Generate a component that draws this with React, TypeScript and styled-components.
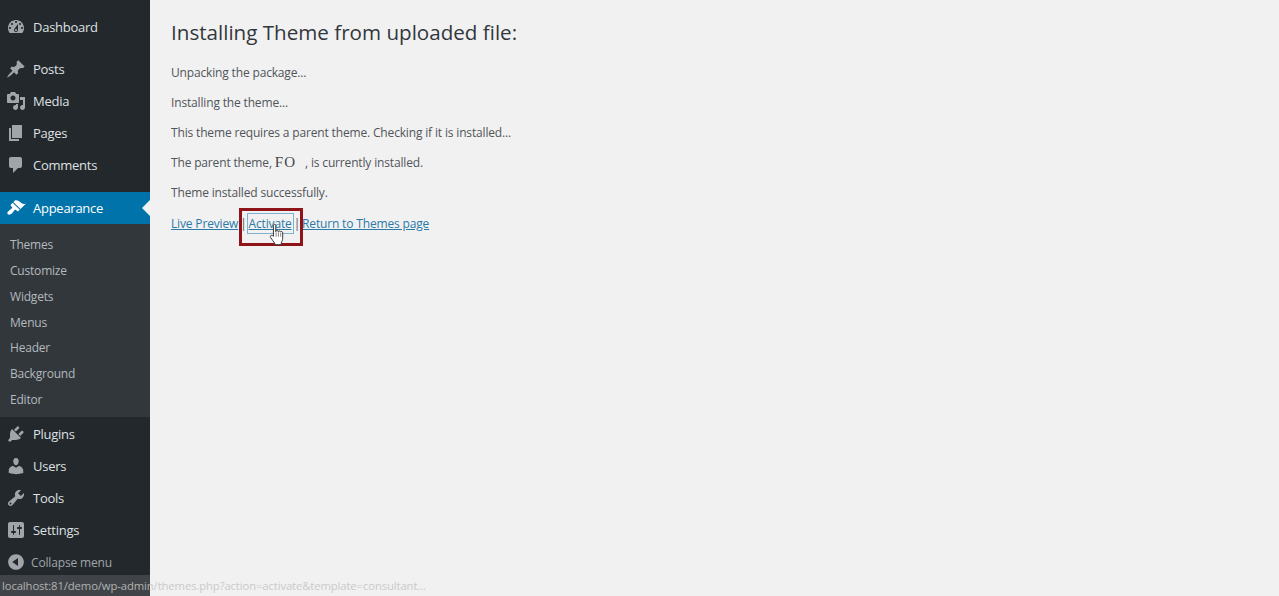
import React, { FC } from 'react';
import styled, { createGlobalStyle } from 'styled-components';

const ICONS: Record<string, string> = {
  dashboard:
    'M3.76 16h12.48c1.1-1.37 1.76-3.11 1.76-5 0-4.42-3.58-8-8-8s-8 3.58-8 8c0 1.89.66 3.63 1.76 5zM10 4c.55 0 1 .45 1 1s-.45 1-1 1-1-.45-1-1 .45-1 1-1zM6 6c.55 0 1 .45 1 1s-.45 1-1 1-1-.45-1-1 .45-1 1-1zm8 0c.55 0 1 .45 1 1s-.45 1-1 1-1-.45-1-1 .45-1 1-1zm-5.37 5.55L12 7v6c0 1.1-.9 2-2 2s-2-.9-2-2c0-.57.24-1.08.63-1.45zM4 10c.55 0 1 .45 1 1s-.45 1-1 1-1-.45-1-1 .45-1 1-1zm12 0c.55 0 1 .45 1 1s-.45 1-1 1-1-.45-1-1 .45-1 1-1zm-5 3c0-.55-.45-1-1-1s-1 .45-1 1 .45 1 1 1 1-.45 1-1z',
  posts:
    'M10.44 3.02l1.82-1.82 6.36 6.35-1.83 1.82c-1.05-.68-2.48-.57-3.41.36l-.75.75c-.92.93-1.04 2.35-.35 3.41l-1.83 1.82-2.41-2.41-2.8 2.79c-.42.42-3.38 2.71-3.8 2.29s1.86-3.39 2.28-3.81l2.79-2.79L4.1 9.36l1.83-1.82c1.05.69 2.48.57 3.4-.36l.75-.75c.93-.92 1.05-2.35.36-3.41z',
  media:
    'M13 11V4c0-.55-.45-1-1-1h-1.67L9 1H5L3.67 3H2c-.55 0-1 .45-1 1v7c0 .55.45 1 1 1h10c.55 0 1-.45 1-1zM7 4.5c1.38 0 2.5 1.12 2.5 2.5S8.38 9.5 7 9.5 4.5 8.38 4.5 7 5.62 4.5 7 4.5zM14 6h5v10.5c0 1.38-1.12 2.5-2.5 2.5S14 17.88 14 16.5s1.12-2.5 2.5-2.5c.17 0 .34.02.5.05V9h-3V6zm-4 8.05V13h2v3.5c0 1.38-1.12 2.5-2.5 2.5S7 17.88 7 16.5 8.12 14 9.5 14c.17 0 .34.02.5.05z',
  pages: 'M6 15V2h10v13H6zm-1 1h8v2H3V5h2v11z',
  comments: 'M5 2h9c1.1 0 2 .9 2 2v7c0 1.1-.9 2-2 2h-2l-5 5v-5H5c-1.1 0-2-.9-2-2V4c0-1.1.9-2 2-2z',
  appearance:
    'M14.48 11.06L7.41 3.99l1.5-1.5c.5-.56 2.3-.47 3.51.32 1.21.8 1.43 1.28 2.91 2.1 1.18.64 2.45 1.26 4.45.85zm-.71.71L6.7 4.7 4.93 6.47c-.39.39-.39 1.02 0 1.41l1.06 1.06c.39.39.39 1.03 0 1.42-.6.6-1.43 1.11-2.21 1.69-.35.26-.7.53-1.01.84C1.43 13.23.91 15.24 1.84 16.17c.92.93 2.94.4 4.28-.94.31-.3.58-.65.84-1 .58-.78 1.09-1.61 1.69-2.21.39-.39 1.02-.39 1.41 0l1.06 1.06c.39.39 1.02.39 1.41 0z',
  plugins:
    'M13.11 4.36L9.87 7.6 8 5.73l3.24-3.24c.35-.34 1.05-.2 1.56.32.52.51.66 1.21.31 1.55zm-8 1.77l.91-1.12 9.01 9.01-1.19.84c-.71.71-2.63 1.16-3.82 1.16H6.14L4.9 17.26c-.59.59-1.54.59-2.12 0-.59-.58-.59-1.53 0-2.12l1.24-1.24v-3.88c0-1.13.4-3.19 1.09-3.89zm7.26 3.97l3.24-3.24c.34-.35 1.04-.21 1.55.31.52.51.66 1.21.31 1.55l-3.24 3.25z',
  users:
    'M10 9.25c-2.27 0-2.73-3.44-2.73-3.44C7 4.02 7.82 2 9.97 2c2.16 0 2.98 2.02 2.71 3.81 0 0-.41 3.44-2.68 3.44zm0 2.57L12.72 10c2.39 0 4.52 2.33 4.52 4.53v2.49s-3.65 1.13-7.24 1.13c-3.65 0-7.24-1.13-7.24-1.13v-2.49c0-2.25 1.94-4.48 4.47-4.48z',
  tools:
    'M16.68 9.77c-1.34 1.34-3.3 1.67-4.95.99l-5.41 6.52c-.99.99-2.59.99-3.58 0s-.99-2.59 0-3.57l6.52-5.42c-.68-1.65-.35-3.61.99-4.95 1.28-1.28 3.12-1.62 4.72-1.06l-2.89 2.89 2.82 2.82 2.86-2.87c.53 1.58.18 3.39-1.08 4.65zM3.81 16.21c.4.39 1.04.39 1.43 0 .4-.4.4-1.04 0-1.43-.39-.4-1.03-.4-1.43 0-.39.39-.39 1.03 0 1.43z',
  settings:
    'M18 16V4c0-1.1-.9-2-2-2H4c-1.1 0-2 .9-2 2v12c0 1.1.9 2 2 2h12c1.1 0 2-.9 2-2zM8 11h1c.55 0 1 .45 1 1s-.45 1-1 1H8v1.5c0 .28-.22.5-.5.5s-.5-.22-.5-.5V13H6c-.55 0-1-.45-1-1s.45-1 1-1h1V5.5c0-.28.22-.5.5-.5s.5.22.5.5V11zm5-2h-1c-.55 0-1-.45-1-1s.45-1 1-1h1V5.5c0-.28.22-.5.5-.5s.5.22.5.5V7h1c.55 0 1 .45 1 1s-.45 1-1 1h-1v5.5c0 .28-.22.5-.5.5s-.5-.22-.5-.5V9z',
  collapse:
    'M10 2.16c4.33 0 7.84 3.51 7.84 7.84s-3.51 7.84-7.84 7.84S2.16 14.33 2.16 10 5.71 2.16 10 2.16zm2 11.72V6.12L6.18 9.97z',
};

const GlobalStyle = createGlobalStyle`
  html, body {
    margin: 0;
    padding: 0;
    height: 100%;
    overflow: hidden;
    background: #f1f1f1;
  }
  body {
    font-family: "Open Sans", "Noto Sans", sans-serif;
  }
`;

const Page = styled.div`
  position: relative;
  display: flex;
  width: 1279px;
  height: 596px;
  overflow: hidden;
`;

const Sidebar = styled.nav`
  flex: 0 0 150px;
  display: flex;
  flex-direction: column;
  padding-top: 11px;
  box-sizing: border-box;
  background: #23282d;
`;

const MenuItem = styled.div<{ $active?: boolean; $gap?: number }>`
  position: relative;
  display: flex;
  align-items: center;
  flex: 0 0 32px;
  margin-bottom: ${(p) => p.$gap ?? 0}px;
  padding-left: 6px;
  gap: 7px;
  font-size: 13px;
  letter-spacing: -0.26px;
  color: ${(p) => (p.$active ? '#ffffff' : '#dfe0e1')};
  background: ${(p) => (p.$active ? '#0073aa' : 'transparent')};

  ${(p) =>
    p.$active
      ? `&::after {
    content: '';
    position: absolute;
    right: 0;
    top: 8px;
    border: 8px solid transparent;
    border-right-color: #f1f1f1;
    border-left-width: 0;
  }`
      : ''}
`;

const MenuIcon = styled.svg<{ $active?: boolean }>`
  flex: 0 0 20px;
  width: 20px;
  height: 20px;
  fill: ${(p) => (p.$active ? '#ffffff' : '#a0a5aa')};
`;

const SubMenu = styled.div`
  display: flex;
  flex-direction: column;
  flex: 0 0 193px;
  margin-bottom: 1px;
  padding: 8px 0 5px;
  box-sizing: border-box;
  background: #32373c;
`;

const SubItem = styled.div`
  flex: 1;
  display: flex;
  align-items: center;
  padding-left: 10px;
  font-size: 12px;
  letter-spacing: -0.2px;
  color: #b4b9be;
`;

const CollapseItem = styled.div`
  display: flex;
  align-items: center;
  flex: 0 0 32px;
  padding-left: 6px;
  gap: 5px;
  font-size: 12px;
  letter-spacing: -0.15px;
  color: #a0a5aa;
`;

const Content = styled.main`
  flex: 1;
  display: flex;
  flex-direction: column;
  padding: 18px 0 0 21px;
  color: #50555a;
  font-size: 12px;
  letter-spacing: -0.16px;
`;

const Heading = styled.h1`
  margin: 0 0 10px;
  font-size: 20.6px;
  line-height: 29px;
  font-weight: 400;
  letter-spacing: 0;
  color: #32373c;
`;

const Line = styled.p`
  display: flex;
  align-items: center;
  margin: 0;
  height: 30.2px;
  white-space: pre;
`;

const ThemeName = styled.span`
  font-family: "Liberation Serif", serif;
  font-size: 15px;
  letter-spacing: 1px;
  margin: 0 9px 0 3px;
  color: #444444;
`;

const ThemeLink = styled.a`
  color: #2a7aa8;
  text-decoration: underline;
`;

const Separator = styled.span`
  margin: 0 2px;
  color: #555555;
`;

const ActiveWrap = styled.span`
  position: relative;
  display: inline-block;
`;

const FocusedLink = styled(ThemeLink)`
  outline: 1px solid #7fb0cf;
  outline-offset: 1px;
`;

const Highlight = styled.span`
  position: absolute;
  left: -10px;
  top: -7px;
  width: 58px;
  height: 32px;
  border: 3px solid #8f1418;
`;

const Cursor = styled.svg`
  position: absolute;
  left: 20px;
  top: 8px;
  width: 16px;
  height: 23px;
`;

const StatusBar = styled.div`
  position: absolute;
  left: 0;
  bottom: 0;
  display: flex;
  align-items: center;
  width: 425px;
  height: 21px;
  padding-left: 2px;
  box-sizing: border-box;
  font-size: 11.3px;
  letter-spacing: -0.12px;
  color: #c4c4c4;
  background: rgba(241, 241, 241, 0.14);
  white-space: nowrap;
`;

const StatusText = styled.span`
  opacity: 0.85;
`;

const Icon: FC<{ name: string; active?: boolean }> = ({ name, active }) => (
  <MenuIcon $active={active} viewBox="0 0 20 20">
    <path d={ICONS[name]} />
  </MenuIcon>
);

const topItems = [
  { name: 'posts', label: 'Posts' },
  { name: 'media', label: 'Media' },
  { name: 'pages', label: 'Pages' },
];

const subItems = ['Themes', 'Customize', 'Widgets', 'Menus', 'Header', 'Background', 'Editor'];

const bottomItems = [
  { name: 'plugins', label: 'Plugins' },
  { name: 'users', label: 'Users' },
  { name: 'tools', label: 'Tools' },
  { name: 'settings', label: 'Settings' },
];

const App: FC = () => (
  <Page>
    <GlobalStyle />
    <Sidebar>
      <MenuItem $gap={10}>
        <Icon name="dashboard" />
        Dashboard
      </MenuItem>
      {topItems.map((item) => (
        <MenuItem key={item.name}>
          <Icon name={item.name} />
          {item.label}
        </MenuItem>
      ))}
      <MenuItem $gap={11}>
        <Icon name="comments" />
        Comments
      </MenuItem>
      <MenuItem $active>
        <Icon name="appearance" active />
        Appearance
      </MenuItem>
      <SubMenu>
        {subItems.map((item) => (
          <SubItem key={item}>{item}</SubItem>
        ))}
      </SubMenu>
      {bottomItems.map((item) => (
        <MenuItem key={item.name}>
          <Icon name={item.name} />
          {item.label}
        </MenuItem>
      ))}
      <CollapseItem>
        <Icon name="collapse" />
        Collapse menu
      </CollapseItem>
    </Sidebar>
    <Content>
      <Heading>Installing Theme from uploaded file:</Heading>
      <Line>Unpacking the package...</Line>
      <Line>Installing the theme...</Line>
      <Line>This theme requires a parent theme. Checking if it is installed...</Line>
      <Line>
        The parent theme,
        <ThemeName>FO</ThemeName>, is currently installed.
      </Line>
      <Line>Theme installed successfully.</Line>
      <Line>
        <ThemeLink>Live Preview</ThemeLink>
        <Separator>|</Separator>
        <ActiveWrap>
          <FocusedLink>Activate</FocusedLink>
          <Highlight />
          <Cursor viewBox="0 0 18 25">
            <path
              d="M5 2.2c0-1.6 2.6-1.6 2.6 0v7l.3-.1c0-1.4 2.3-1.4 2.4 0l.2.2c.2-1.2 2.3-1.1 2.4.2l.2.3c.4-1 2.2-.8 2.3.6v6.2c0 2.6-1 3.6-1.6 5.4v2H6.4v-1.7c-1.4-1.9-3-4.1-4.6-6.6-1-1.6.9-3 2.2-1.8L5 14.5z"
              fill="#ffffff"
              stroke="#222222"
              strokeWidth="1"
              strokeLinejoin="round"
            />
            <path d="M8 10v5M10.6 10v5M13.2 10.5V15" stroke="#555555" strokeWidth="0.8" fill="none" />
          </Cursor>
        </ActiveWrap>
        <Separator>|</Separator>
        <ThemeLink>Return to Themes page</ThemeLink>
      </Line>
    </Content>
    <StatusBar>
      <StatusText>localhost:81/demo/wp-admin/themes.php?action=activate&amp;template=consultant...</StatusText>
    </StatusBar>
  </Page>
);

export default App;
